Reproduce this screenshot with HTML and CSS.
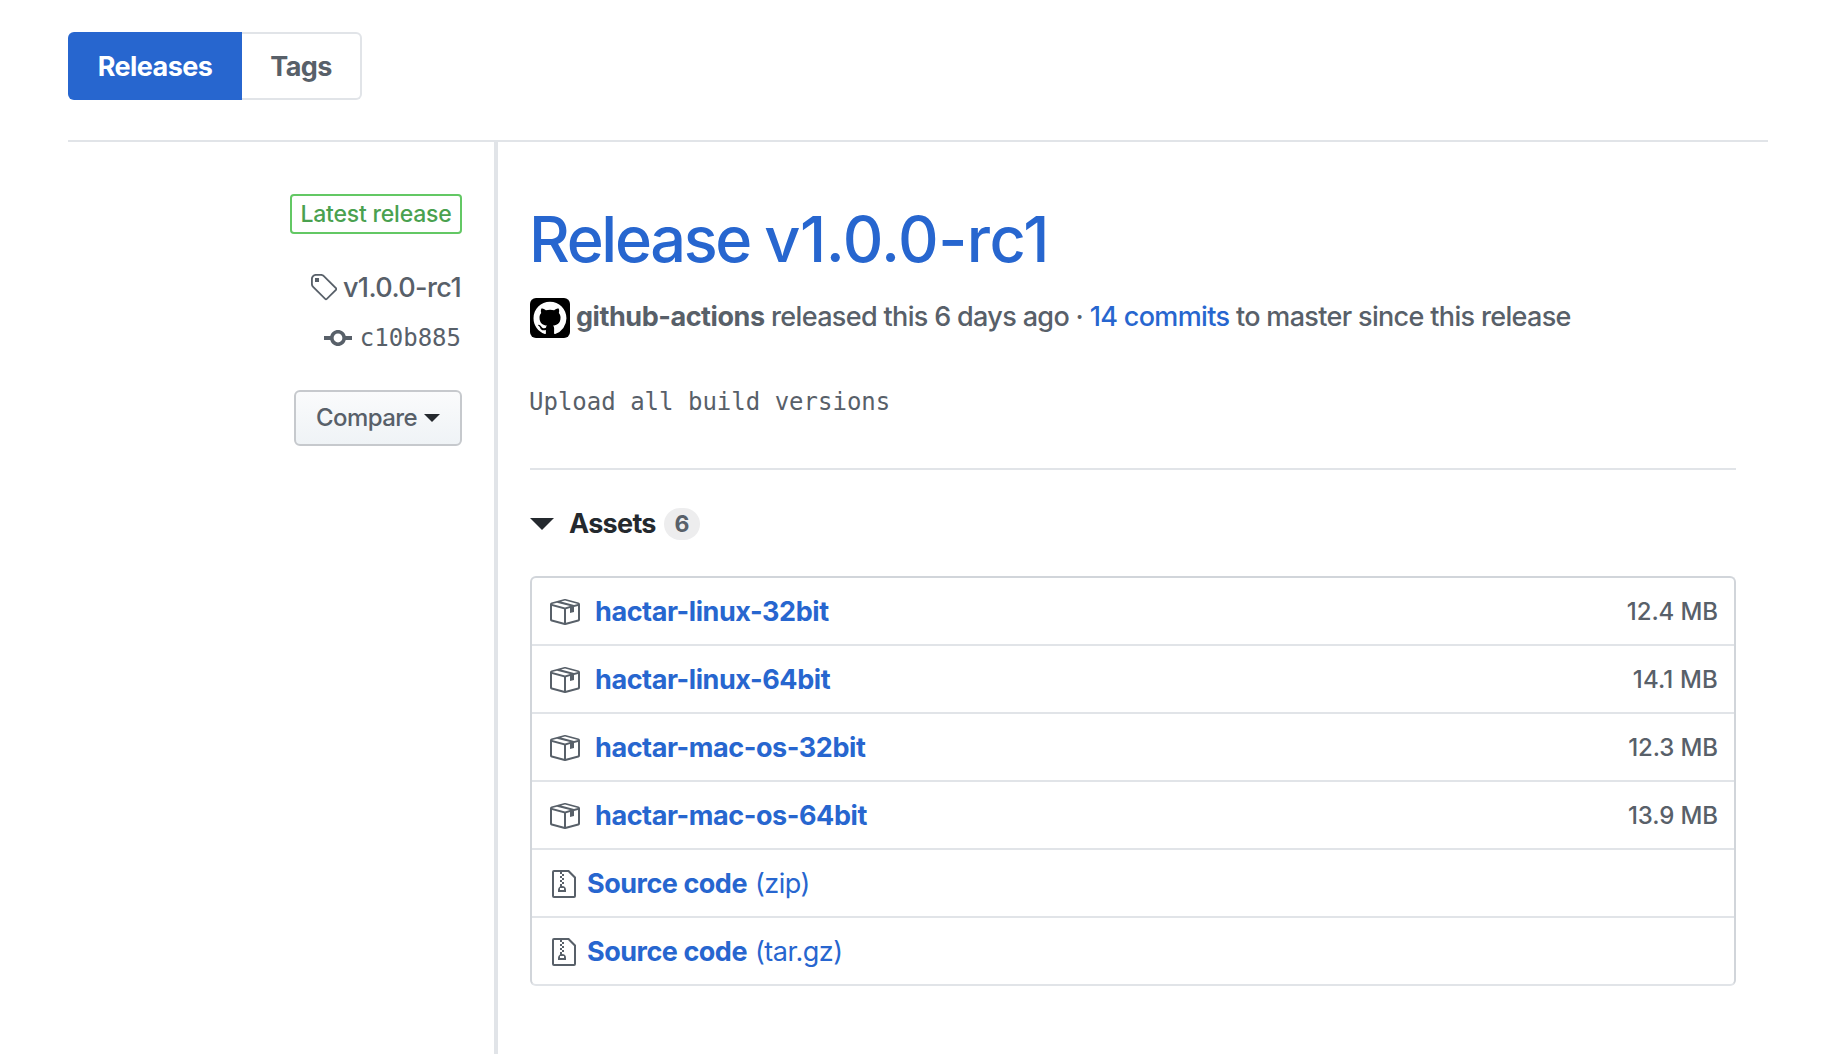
FILE: index.html
```html
<!DOCTYPE html>
<html lang="en">
<head>
<meta charset="utf-8">
<title>Releases</title>
<link rel="stylesheet" href="styles.css">
</head>
<body>
<svg class="sprite" aria-hidden="true">
  <symbol id="package" viewBox="0 0 16 16"><path fill-rule="evenodd" d="M1 4.27v7.47c0 .45.3.84.75.97l6.5 1.73c.16.05.34.05.5 0l6.5-1.73c.45-.13.75-.52.75-.97V4.27c0-.45-.3-.84-.75-.97l-6.5-1.74a1.4 1.4 0 0 0-.5 0L1.75 3.3c-.45.13-.75.52-.75.97zm7 9.09l-6-1.59V5l6 1.61v6.75zM2 4l2.5-.67L11 5.06l-2.5.67L2 4zm13 7.77l-6 1.59V6.61l2-.55V8.5l2-.53V5.53L15 5v6.77zm-2-7.24L6.5 2.8l2-.53L15 4l-2 .53z"/></symbol>
  <symbol id="zip" viewBox="0 0 12 16"><path fill-rule="evenodd" d="M8.5 1H1a1 1 0 0 0-1 1v12a1 1 0 0 0 1 1h10a1 1 0 0 0 1-1V4.5L8.5 1zM11 14H1V2h3v1h1V2h3l3 3v9zM5 4V3h1v1H5zM4 4h1v1H4V4zm1 2V5h1v1H5zM4 6h1v1H4V6zm1 2V7h1v1H5zM4 9.28A2 2 0 0 0 3 11v1h4v-1a2 2 0 0 0-2-2V8H4v1.28zM6 10v1H4v-1h2z"/></symbol>
</svg>
<main class="page">
  <nav class="tabs">
    <a class="tab tab-active">Releases</a>
    <a class="tab">Tags</a>
  </nav>
  <div class="release">
    <aside class="meta">
      <span class="badge">Latest release</span>
      <a class="ref ref-tag">
        <svg width="28" height="32" viewBox="0 0 14 16"><path fill-rule="evenodd" d="M7.73 1.73C7.26 1.26 6.62 1 5.96 1H3.5C2.13 1 1 2.13 1 3.5v2.47c0 .66.27 1.3.73 1.77l6.06 6.06c.39.39 1.02.39 1.41 0l4.59-4.59a.996.996 0 0 0 0-1.41L7.73 1.73zM2.38 7.09c-.31-.3-.47-.7-.47-1.13V3.5c0-.88.72-1.59 1.59-1.59h2.47c.42 0 .83.16 1.13.47l6.14 6.13-4.73 4.73-6.13-6.15zM3.01 3h2v2H3V3h.01z"/></svg>
        <span>v1.0.0-rc1</span>
      </a>
      <a class="ref ref-commit">
        <svg width="28" height="32" viewBox="0 0 14 16"><path fill-rule="evenodd" d="M10.86 7c-.45-1.72-2-3-3.86-3-1.86 0-3.41 1.28-3.86 3H0v2h3.14c.45 1.72 2 3 3.86 3 1.86 0 3.41-1.28 3.86-3H14V7h-3.14zM7 10.2c-1.22 0-2.2-.98-2.2-2.2 0-1.22.98-2.2 2.2-2.2 1.22 0 2.2.98 2.2 2.2 0 1.22-.98 2.2-2.2 2.2z"/></svg>
        <code>c10b885</code>
      </a>
      <button class="compare">Compare<i class="caret"></i></button>
    </aside>
    <section class="content">
      <h1 class="title"><span class="title-word">Release</span> v1.0.0-rc1</h1>
      <div class="byline">
        <svg class="avatar" width="40" height="40" viewBox="0 0 40 40"><rect width="40" height="40" rx="6"/><path fill="#fff" fill-rule="evenodd" transform="translate(3.5 3.8) scale(2.06)" d="M8 0C3.58 0 0 3.58 0 8c0 3.54 2.29 6.53 5.47 7.59.4.07.55-.17.55-.38 0-.19-.01-.82-.01-1.49-2.01.37-2.53-.49-2.69-.94-.09-.23-.48-.94-.82-1.13-.28-.15-.68-.52-.01-.53.63-.01 1.08.58 1.23.82.72 1.21 1.87.87 2.33.66.07-.52.28-.87.51-1.07-1.78-.2-3.64-.89-3.64-3.95 0-.87.31-1.59.82-2.15-.08-.2-.36-1.02.08-2.12 0 0 .67-.21 2.2.82.64-.18 1.32-.27 2-.27.68 0 1.36.09 2 .27 1.53-1.04 2.2-.82 2.2-.82.44 1.1.16 1.92.08 2.12.51.56.82 1.27.82 2.15 0 3.07-1.87 3.75-3.65 3.95.29.25.54.73.54 1.48 0 1.07-.01 1.93-.01 2.2 0 .21.15.46.55.38A8.013 8.013 0 0 0 16 8c0-4.42-3.58-8-8-8z"/></svg>
        <p><strong>github-actions</strong> released this 6 days ago · <a class="link">14 commits</a> to master since this release</p>
      </div>
      <pre class="notes">Upload all build versions</pre>
      <div class="assets-head"><i class="triangle"></i><span class="assets-label">Assets</span><span class="count">6</span></div>
      <ul class="assets">
        <li><svg class="pkg"><use href="#package"/></svg><b>hactar-linux-32bit</b><small>12.4 MB</small></li>
        <li><svg class="pkg"><use href="#package"/></svg><b>hactar-linux-64bit</b><small>14.1 MB</small></li>
        <li><svg class="pkg"><use href="#package"/></svg><b>hactar-mac-os-32bit</b><small>12.3 MB</small></li>
        <li><svg class="pkg"><use href="#package"/></svg><b>hactar-mac-os-64bit</b><small>13.9 MB</small></li>
        <li class="source"><svg class="zip"><use href="#zip"/></svg><b>Source code</b><span class="kind">(zip)</span></li>
        <li class="source"><svg class="zip"><use href="#zip"/></svg><b>Source code</b><span class="kind">(tar.gz)</span></li>
      </ul>
    </section>
  </div>
</main>
</body>
</html>
```

FILE: styles.css
```css
* { box-sizing: border-box; }
body {
  margin: 0;
  background: #fff;
  color: #586069;
  font: 27px/40px Inter, "Liberation Sans", sans-serif;
}
.sprite { display: none; }
svg { display: block; flex: none; fill: currentColor; }
span, b, strong, small, a, p { white-space: nowrap; }
.page { height: 1054px; padding: 32px 70px 0 68px; overflow: hidden; display: flex; flex-direction: column; }
.tabs { display: flex; height: 68px; margin-bottom: 40px; flex: none; }
.tab {
  display: flex; align-items: center; justify-content: center;
  width: 120px;
  padding-top: 1px;
  border: 2px solid #e1e4e8; border-left: 0; border-radius: 0 6px 6px 0;
  font-weight: 650; letter-spacing: -.6px;
}
.tab-active { width: 174px; border: 0; border-radius: 6px 0 0 6px; background: #2766cf; color: #fff; }
.release { display: flex; flex: 1; border-top: 2px solid #e1e4e8; }
.meta { width: 430px; border-right: 4px solid #e1e4e8; padding: 52px 32px 0 0; display: flex; flex-direction: column; align-items: flex-end; }
.badge {
  display: flex; align-items: center; justify-content: center;
  width: 172px; height: 40px;
  border: 2px solid #63c864; border-radius: 4px;
  color: #4aa14f; font-size: 23px; font-weight: 450; letter-spacing: -.2px;
}
.ref { display: flex; align-items: center; height: 40px; margin-right: 1px; }
.ref-tag { margin-top: 34px; font-weight: 450; letter-spacing: -.6px; }
.ref-tag svg { margin-right: 6px; }
.ref-commit { margin-top: 10px; }
.ref-commit svg { margin-right: 8px; }
.ref code { font: 24px/40px "DejaVu Sans Mono", monospace; }
.compare {
  display: flex; align-items: center; justify-content: center; gap: 7px;
  width: 168px; height: 56px; margin-top: 32px; padding: 0;
  border: 2px solid #c6c9cd; border-radius: 6px;
  background: linear-gradient(#fafbfc, #eff3f6);
  color: #586069; font: 500 24px/40px Inter, sans-serif; letter-spacing: -.6px;
}
.caret { border: 8px solid transparent; border-top-color: #24292e; border-bottom: 0; }
.content { flex: 1; padding: 62px 32px 0; }
.title { margin: 0; font-size: 63px; line-height: 70px; font-weight: 450; word-spacing: -2px; letter-spacing: -.5px; text-indent: -1px; color: #2766cf; }
.title-word { letter-spacing: -2.3px; }
.byline { display: flex; height: 40px; margin-top: 24px; font-weight: 450; letter-spacing: -.66px; }
.avatar { margin-right: 6px; fill: #000; }
.byline p { margin: 0; line-height: 37px; }
.byline strong { font-weight: 650; letter-spacing: -.45px; }
.link { color: #2766cf; }
.notes { margin: 44px 0 0; height: 88px; border-bottom: 2px solid #e1e4e8; font: 24px/40px "DejaVu Sans Mono", monospace; text-indent: -1px; }
.assets-head { display: flex; align-items: center; height: 40px; margin: 34px 0 32px; color: #24292e; font-weight: 650; }
.triangle { border: 12px solid transparent; border-top-color: #24292e; border-bottom: 0; margin-right: 15px; }
.assets-label { width: 95px; letter-spacing: -.7px; }
.count { width: 36px; height: 32px; border-radius: 16px; background: #ededee; color: #586069; font-size: 23px; line-height: 32px; text-align: center; }
.assets { margin: 0; padding: 0; list-style: none; border: 2px solid #d1d5da; border-bottom-color: #e1e4e8; border-radius: 6px; }
.assets li { display: flex; align-items: center; height: 68px; padding: 2px 16px 0; border-bottom: 2px solid #e1e4e8; color: #2766cf; }
.assets li:last-child { border: 0; height: 68px; padding-bottom: 2px; }
.assets b { font-weight: 650; letter-spacing: -.42px; }
.assets .source b { width: 168px; letter-spacing: -.48px; }
.assets svg { color: #586069; }
.pkg { width: 32px; height: 32px; margin-right: 15px; }
.zip { width: 24px; height: 32px; margin: 0 11px 0 4px; }
.kind { letter-spacing: -.5px; }
.assets small { margin-left: auto; color: #586069; font-size: 24px; line-height: 38px; font-weight: 450; letter-spacing: -.1px; }
.assets li:nth-child(2) small { letter-spacing: .15px; }
.assets li:last-child { height: 66px; padding-bottom: 0; }
```
